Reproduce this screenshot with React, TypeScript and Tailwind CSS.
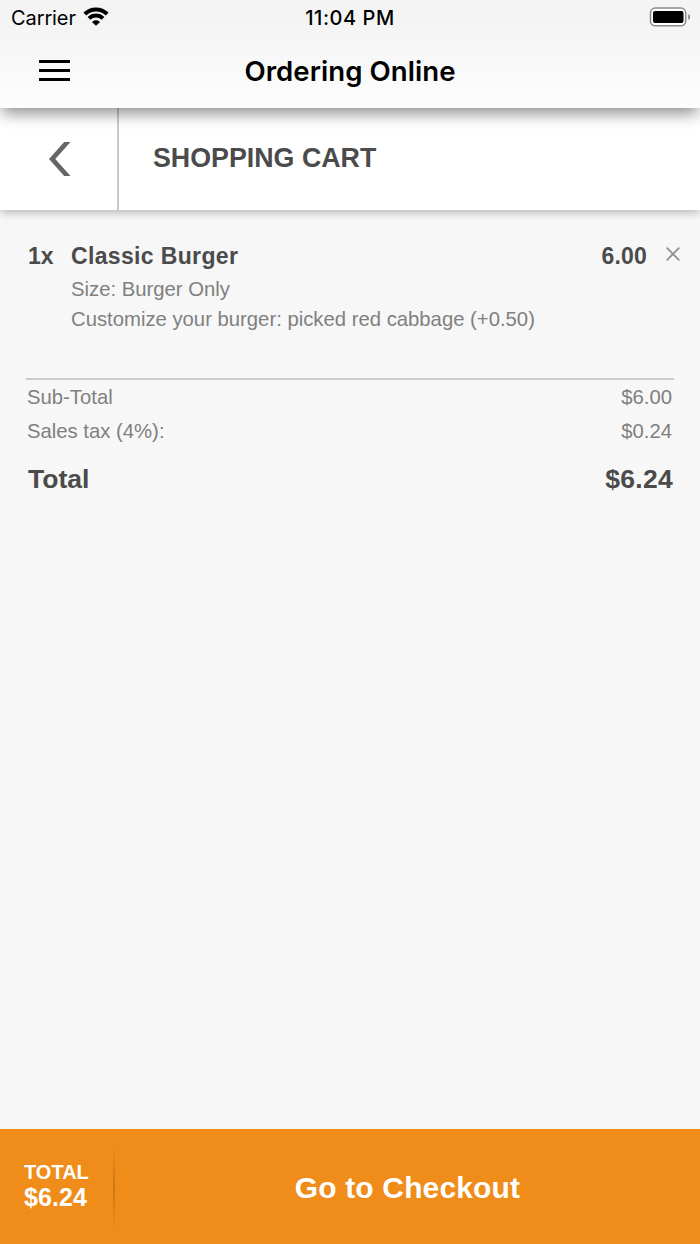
import React from "react";

function StatusBar() {
  return (
    <div className="flex h-9 items-center pl-[11px] pr-[9px] text-[20px] leading-9">
      <div className="flex flex-1 items-center gap-[7px]">
        <span className="tracking-[-0.1px]">Carrier</span>
        <svg className="mt-[-3px]" width="26" height="19" viewBox="0 0 26 19" fill="none" stroke="#000" strokeWidth="4">
          <path d="M1.8 7C8 0.9 18 0.9 24.2 7" />
          <path d="M6 11.4C10 7.5 16 7.5 20 11.4" />
          <path d="M9 14.9C11.2 12.6 14.8 12.6 17 14.9L13 18.8Z" fill="#000" stroke="none" />
        </svg>
      </div>
      <span className="mr-[2px] font-medium tracking-[0.55px]">11:04 PM</span>
      <div className="flex flex-1 justify-end">
        <svg className="mt-[-2px]" width="42" height="20" viewBox="0 0 42 20">
          <rect x="1.5" y="1" width="35.2" height="17.8" rx="4.8" fill="#fff" stroke="#8b8b8b" strokeWidth="1.5" />
          <rect x="4" y="4" width="30.5" height="12" rx="2" fill="#000" />
          <path d="M39.3 7C41.5 8 41.5 12 39.3 13Z" fill="#777" />
        </svg>
      </div>
    </div>
  );
}

function SummaryRow({ label, value }: { label: string; value: string }) {
  return (
    <div className="flex h-[34px] items-center justify-between pl-[1px] pr-[2px] text-[20.3px] text-[#808080]">
      <span>{label}</span>
      <span>{value}</span>
    </div>
  );
}

export default function App() {
  return (
    <div className="flex h-[1244px] w-[700px] flex-col overflow-hidden bg-[#f7f7f7] font-['Liberation_Sans',Arial,sans-serif] text-[#4b4b4b]">
      <header className="z-20 h-[108px] shrink-0 bg-linear-to-b from-[#f4f4f4] from-20% to-[#fdfdfd] font-['Inter',sans-serif] text-black shadow-[0_8px_14px_-2px_rgba(0,0,0,0.42)]">
        <StatusBar />
        <div className="grid h-[70px] grid-cols-[120px_1fr_120px] items-center">
          <div className="flex flex-col gap-[6px] pb-[1px] pl-[39px]">
            <i className="h-[3px] w-[31px] bg-black" />
            <i className="h-[3px] w-[31px] bg-black" />
            <i className="h-[3px] w-[31px] bg-black" />
          </div>
          <h1 className="pt-[1px] text-center text-[27.6px] font-semibold tracking-[0.05px]">Ordering Online</h1>
        </div>
      </header>

      <section className="z-10 flex h-[102px] shrink-0 bg-white shadow-[0_4px_8px_-1px_rgba(0,0,0,0.25)]">
        <button className="flex w-[119px] items-center justify-center border-r-2 border-[#c9c9c9] pl-[2px]" aria-label="Back">
          <svg width="22" height="34" viewBox="0 0 22 34">
            <path d="M15.2 0H21.5L6.3 17L21.5 34H15.2L0 17Z" fill="#666" />
          </svg>
        </button>
        <h2 className="pl-[34px] text-[26.8px] font-bold leading-[100px]">SHOPPING CART</h2>
      </section>

      <main className="flex-1 px-[26px] pt-[30px]">
        <div className="flex h-[32px] items-center text-[23px] font-bold">
          <span className="w-[45px] pl-[2px]">1x</span>
          <span className="flex-1 tracking-[0.35px]">Classic Burger</span>
          <span className="mr-[19px] tracking-[0.2px]">6.00</span>
          <svg className="mr-[-6px] mt-[-4px]" width="14" height="14" viewBox="0 0 14 14" stroke="#929292" strokeWidth="1.8">
            <path d="M0.7 0.7L13.3 13.3M13.3 0.7L0.7 13.3" />
          </svg>
        </div>
        <div className="pl-[45px] pt-[2px] text-[20.3px] leading-[30px] text-[#808080]">
          <p>Size: Burger Only</p>
          <p>Customize your burger: picked red cabbage (+0.50)</p>
        </div>
        <div className="mt-[44px] border-t-2 border-[#cbcbcb]">
          <SummaryRow label="Sub-Total" value="$6.00" />
          <SummaryRow label="Sales tax (4%):" value="$0.24" />
          <div className="flex h-[64px] items-center justify-between pl-[2px] pr-[1px] text-[26.5px] font-bold">
            <span>Total</span>
            <span className="tracking-[0.3px]">$6.24</span>
          </div>
        </div>
      </main>

      <footer className="flex h-[115px] shrink-0 items-center bg-[#f08c19] font-bold text-white">
        <div className="flex w-[113px] flex-col pb-[4px] pl-6">
          <span className="text-[20px] leading-[26px]">TOTAL</span>
          <span className="text-[25px] leading-[25px] tracking-[0.1px]">$6.24</span>
        </div>
        <div className="h-[86px] w-[2px] bg-linear-to-b from-transparent via-[#cc7715] to-transparent" />
        <button className="flex-1 pt-[2px] text-[30px] font-bold tracking-[0.15px]">Go to Checkout</button>
      </footer>
    </div>
  );
}
